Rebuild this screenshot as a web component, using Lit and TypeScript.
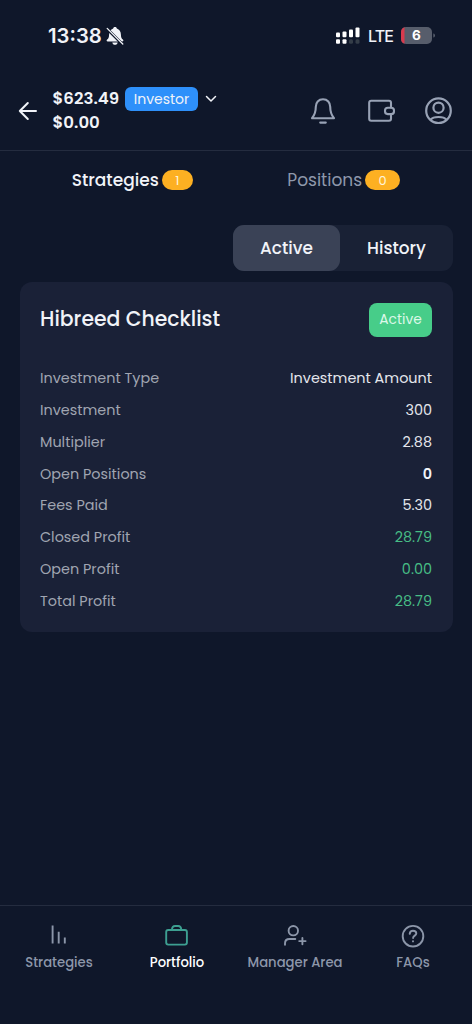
import { LitElement, html, css, svg } from "lit";
import { customElement } from "lit/decorators.js";
import { classMap } from "lit/directives/class-map.js";

const rows: [string, string, string][] = [
  ["Investment Type", "Investment Amount", "value"],
  ["Investment", "300", "value"],
  ["Multiplier", "2.88", "value"],
  ["Open Positions", "0", "strong"],
  ["Fees Paid", "5.30", "value"],
  ["Closed Profit", "28.79", "gain"],
  ["Open Profit", "0.00", "gain"],
  ["Total Profit", "28.79", "gain"],
];

const navItems = [
  { label: "Strategies", icon: svg`<path stroke-linecap="butt" d="M7.600 5.500v18M13.700 11.800V23.500M19.800 17.500v6"/>` },
  { label: "Portfolio", icon: svg`<rect x="3.200" y="10" width="20.700" height="14.600" rx="2"/><path d="M8.900 10c.1-2.500 1.300-4 3.200-4h3c1.900 0 3.100 1.500 3.200 4"/>` },
  { label: "Manager Area", icon: svg`<circle cx="12.300" cy="10.700" r="4.700"/><path d="M4 24.800v-1.300c0-2.900 1.700-4.500 4.500-4.500h5.800M21.400 17.900v6.400M18.200 21.100h6.400"/>` },
  { label: "FAQs", icon: svg`<circle cx="14" cy="16.200" r="10.300"/><path d="M10.700 13.800c.2-2 1.500-3 3.300-3s3.300 1.100 3.300 2.700c0 2.100-3.200 2.200-3.200 4.500"/><path d="M14 21.100v.3"/>` },
];

@customElement("app-root")
export class AppRoot extends LitElement {
  static styles = css`
    :host { display: flex; flex-direction: column; height: 1024px; box-sizing: border-box; background: #0f172a; color: #f1f3f8; font-family: Poppins, Inter, sans-serif; overflow: hidden; }
    svg { display: block; flex: none; fill: none; stroke: currentColor; stroke-linecap: round; stroke-linejoin: round; }
    .status { display: flex; height: 71px; align-items: center; box-sizing: border-box; padding: 0 37px 0 48px; font-family: Inter, sans-serif; }
    .time { font-size: 20.3px; font-weight: 600; width: 57px; white-space: nowrap; }
    .signal { margin-left: auto; }
    .lte { font-size: 16px; font-weight: 500; letter-spacing: -0.9px; margin: 0 8px 0 8px; width: 25px; }
    .header { display: flex; height: 80px; box-sizing: border-box; border-bottom: 1px solid #242c3f; align-items: center; padding: 0 19px 0 18px; }
    .account { margin-left: 14.5px; font-weight: 600; font-size: 16.6px; }
    .line { display: flex; align-items: center; height: 24px; white-space: nowrap; }
    .sum { width: 67px; line-height: 24px; }
    .investor { background: #2e90fa; border-radius: 6px; height: 24px; line-height: 24px; width: 73px; text-align: center; font-size: 14px; font-weight: 400; margin: 0 6px 0 5.5px; }
    .icons { margin-left: auto; display: flex; align-items: center; gap: 30px; color: #98a2b5; }
    .tabs { display: grid; grid-template-columns: 212.5px 1fr; padding: 0 23px 0 26px; height: 58px; align-items: center; }
    .tab { display: flex; justify-content: center; align-items: center; gap: 3px; font-size: 17px; line-height: 20px; color: #8e98ab; }
    .tab.on { color: #f1f3f8; font-weight: 500; }
    .pill { background: #fdb022; color: #fff5dc; font-size: 13px; font-weight: 400; height: 20px; line-height: 21px; border-radius: 10px; width: 31px; text-align: center; }
    .pill.wide { width: 35px; }
    .switch { display: flex; margin: 16px 19px 0 0; align-self: flex-end; width: 220px; height: 46px; border-radius: 11px; background: #192135; font-size: 16.9px; font-weight: 500; line-height: 46px; text-align: center; }
    .seg { width: 107px; }
    .seg.on { background: #3a4256; border-radius: 11px; }
    .seg:last-child { width: 113px; }
    .card { margin: 11px 19px 0 20px; height: 350px; box-sizing: border-box; border-radius: 12px; background: #1a2137; padding: 21px 21px 0 20px; }
    .head { display: flex; justify-content: space-between; align-items: flex-start; height: 34px; margin-bottom: 25.7px; }
    .title { font-size: 20.4px; font-weight: 500; line-height: 32px; }
    .chip { width: 63px; height: 34px; line-height: 34px; background: #47cd89; border-radius: 8px; font-size: 13.8px; text-align: center; color: #dcf8e8; }
    .row { display: flex; justify-content: space-between; align-items: center; height: 31.85px; font-size: 14.4px; white-space: nowrap; }
    .label { color: #a0a5b1; }
    .value { color: #e4e6ec; }
    .strong { font-weight: 600; }
    .gain { color: #47bd85; }
    .nav { margin-top: auto; display: grid; grid-template-columns: repeat(4, 1fr); height: 119px; box-sizing: border-box; border-top: 1px solid #242c3f; padding-top: 14px; }
    .item { display: flex; flex-direction: column; align-items: center; font-size: 13.2px; line-height: 20px; font-weight: 500; color: #8c96a9; gap: 3px; }
    .item.on { color: #fff; }
    .item.on svg { color: #3d9f91; }
  `;

  render() {
    return html`
      <div class="status">
        <span class="time">13:38</span>
        <svg width="20" height="20" viewBox="0 0 20 20"><path fill="currentColor" stroke="none" d="M10 1c1 0 1.700.6 1.800 1.400 2.600.9 4.100 3.200 4.100 6 0 3.300.9 4.300 2 5.200.9.900.5 1.900-.6 1.900H2.700c-1.100 0-1.500-1-.6-1.900 1.100-.9 2-1.900 2-5.200 0-2.800 1.500-5.100 4.100-6C8.300 1.600 9 1 10 1zM7.300 16.500h5.400c-.3 1.400-1.300 2.300-2.700 2.300s-2.400-.9-2.700-2.300z"/><path d="M2.500 3.200l14.500 14.500" stroke="#0f172a" stroke-width="3"/><path d="M2.200 2.400l15.600 15.600" stroke-width="1.300"/></svg>
        <svg class="signal" width="24" height="18" viewBox="0 0 24 18"><g fill="#fff" stroke="none"><rect x="0" y="5.500" width="4" height="4.700" rx="1"/><rect x="6.500" y="4.500" width="4" height="5.700" rx="1"/><rect x="13" y="2.500" width="4" height="7.700" rx="1"/><rect x="19.500" y="0.500" width="4" height="9.700" rx="1"/><rect x="0" y="12.200" width="4" height="4.500" rx="1"/><rect x="6.500" y="12.200" width="4" height="4.500" rx="1"/></g><g fill="#343d48" stroke="none"><rect x="13" y="12.200" width="4" height="4.500" rx="1.500"/><rect x="19.500" y="12.200" width="4" height="4.500" rx="1.500"/></g></svg>
        <span class="lte">LTE</span>
        <svg width="34" height="17" viewBox="0 0 34 17"><rect width="31" height="17" rx="5" fill="#575d6b" stroke="none"/><path d="M3.500 .3C1.300 1 0 2.800 0 5v7c0 2.200 1.300 4 3.500 4.700z" fill="#d93a4d" stroke="none"/><path d="M32.300 6.500v4c1.300-.4 1.700-1.200 1.700-2s-.4-1.600-1.700-2z" fill="#575d6b" stroke="none"/><text x="15.500" y="13.300" text-anchor="middle" fill="#fff" stroke="none" font-family="Inter" font-size="13.500" font-weight="700">6</text></svg>
      </div>
      <div class="header">
        <svg width="20" height="20" viewBox="0 0 20 20" stroke-width="2"><path d="M18 10H1.800M9.800 2l-8 8 8 8"/></svg>
        <div class="account">
          <div class="line"><span class="sum">$623.49</span><span class="investor">Investor</span><svg width="14" height="14" viewBox="0 0 14 14" stroke-width="1.500"><path d="M2.500 4.500L7 9l4.500-4.500"/></svg></div>
          <div class="line"><span class="sum">$0.00</span></div>
        </div>
        <div class="icons">
          <svg width="28" height="28" viewBox="0 0 28 28" stroke-width="2.100"><path d="M14 2.300C9.500 2.300 6.800 5.500 6.800 9.700c0 6.300-1.300 8.500-3.800 11.500h22c-2.500-3-3.800-5.200-3.800-11.500C21.200 5.500 18.500 2.300 14 2.300zM11.200 25.600h5.600"/></svg>
          <svg width="28" height="28" viewBox="0 0 28 28" stroke-width="2.100"><path d="M24 10.500V5.800c0-1.300-.7-2-2-2H4.200c-1.300 0-2 .7-2 2v15.900c0 1.300.7 2 2 2H22c1.300 0 2-.7 2-2V17.300"/><rect x="18" y="10.700" width="9" height="6.400" rx="2.800"/></svg>
          <svg width="28" height="28" viewBox="0 0 28 28" stroke-width="2.200"><circle cx="13.500" cy="13.700" r="12.300"/><circle cx="13.500" cy="10.700" r="5.100"/><path d="M5.800 22.700c1.300-2 3.800-2.700 7.700-2.700s6.400.7 7.700 2.700"/></svg>
        </div>
      </div>
      <div class="tabs">
        <div class="tab on"><span>Strategies</span><span class="pill">1</span></div>
        <div class="tab"><span>Positions</span><span class="pill wide">0</span></div>
      </div>
      <div class="switch"><div class="seg on">Active</div><div class="seg">History</div></div>
      <div class="card">
        <div class="head"><span class="title">Hibreed Checklist</span><span class="chip">Active</span></div>
        ${rows.map(([label, value, kind]) => html`<div class="row"><span class="label">${label}</span><span class=${kind}>${value}</span></div>`)}
      </div>
      <div class="nav">
        ${navItems.map((n, i) => html`<div class=${classMap({ item: true, on: i === 1 })}><svg width="28" height="30" viewBox="0 0 28 30" stroke-width="1.900">${n.icon}</svg><span>${n.label}</span></div>`)}
      </div>`;
  }
}
